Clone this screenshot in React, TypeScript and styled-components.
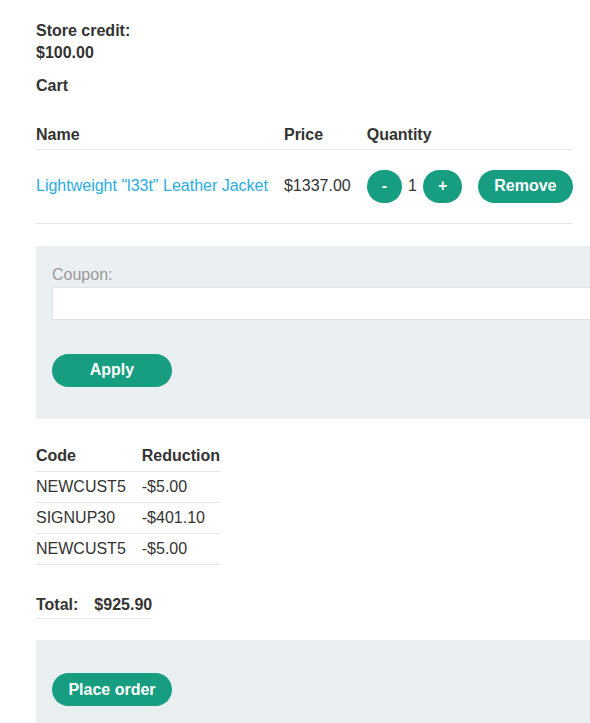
import React, { useState } from 'react';
import styled, { createGlobalStyle } from 'styled-components';

const GlobalStyle = createGlobalStyle`
  html, body {
    margin: 0;
    padding: 0;
    overflow-x: hidden;
    background: #fff;
  }
  body {
    font-family: "Liberation Sans", Arial, sans-serif;
    font-size: 16px;
    line-height: 1.4;
    color: #333332;
  }
`;

type Coupon = { code: string; reduction: string };

const coupons: Coupon[] = [
  { code: 'NEWCUST5', reduction: '-$5.00' },
  { code: 'SIGNUP30', reduction: '-$401.10' },
  { code: 'NEWCUST5', reduction: '-$5.00' },
];

const App: React.FC = () => {
  const [quantity, setQuantity] = useState(1);
  const [coupon, setCoupon] = useState('');

  return (
    <Page>
      <GlobalStyle />
      <Credit>
        Store credit:
        <br />
        $100.00
      </Credit>
      <Heading>Cart</Heading>

      <CartTable>
        <thead>
          <tr>
            <HeadCell>Name</HeadCell>
            <HeadCell>Price</HeadCell>
            <HeadCell>Quantity</HeadCell>
            <HeadCell />
          </tr>
        </thead>
        <tbody>
          <tr>
            <ItemCell>
              <ProductLink href="#">Lightweight "l33t" Leather Jacket</ProductLink>
            </ItemCell>
            <ItemCell>$1337.00</ItemCell>
            <ItemCell>
              <QuantityBox>
                <Button $narrow onClick={() => setQuantity(q => Math.max(0, q - 1))}>-</Button>
                <span>{quantity}</span>
                <Button $narrow onClick={() => setQuantity(q => q + 1)}>+</Button>
              </QuantityBox>
            </ItemCell>
            <ItemCell>
              <Button>Remove</Button>
            </ItemCell>
          </tr>
        </tbody>
      </CartTable>

      <CouponPanel>
        <FieldLabel htmlFor="coupon">Coupon:</FieldLabel>
        <TextInput id="coupon" value={coupon} onChange={e => setCoupon(e.target.value)} />
        <ApplyButton $wide>Apply</ApplyButton>
      </CouponPanel>

      <CodeTable>
        <thead>
          <tr>
            <CodeHead>Code</CodeHead>
            <CodeHead>Reduction</CodeHead>
          </tr>
        </thead>
        <tbody>
          {coupons.map((c, i) => (
            <tr key={i}>
              <CodeCell>{c.code}</CodeCell>
              <CodeCell>{c.reduction}</CodeCell>
            </tr>
          ))}
        </tbody>
      </CodeTable>

      <TotalTable>
        <tbody>
          <tr>
            <TotalCell>Total:</TotalCell>
            <TotalCell>$925.90</TotalCell>
          </tr>
        </tbody>
      </TotalTable>

      <OrderPanel>
        <Button $wide>Place order</Button>
      </OrderPanel>
    </Page>
  );
};

const Page = styled.div`
  padding: 20px 0 0 36px;
`;

const Credit = styled.p`
  margin: 0;
  font-weight: bold;
`;

const Heading = styled.p`
  margin: 10px 0 0;
  font-weight: bold;
`;

const CartTable = styled.table`
  border-collapse: collapse;
  margin-top: 21px;
`;

const HeadCell = styled.th`
  text-align: left;
  font-weight: bold;
  padding: 6px 16px 2px 0;
  border-bottom: 1px solid #e6e6e6;
  &:last-child {
    padding-right: 0;
  }
`;

const ItemCell = styled.td`
  padding: 20px 16px 20px 0;
  border-bottom: 1px solid #e6e6e6;
  vertical-align: middle;
  white-space: nowrap;
  &:last-child {
    padding-right: 0;
  }
`;

const ProductLink = styled.a`
  color: #29ace5;
  text-decoration: none;
`;

const QuantityBox = styled.div`
  display: flex;
  align-items: center;
  gap: 6px;
`;

const Button = styled.button<{ $narrow?: boolean; $wide?: boolean }>`
  display: inline-flex;
  align-items: center;
  justify-content: center;
  height: 33px;
  min-width: ${p => (p.$wide ? '120px' : '0')};
  padding: 0 ${p => (p.$narrow ? '15px' : '16px')};
  border: none;
  border-radius: 25px;
  background: #179d80;
  color: #fff;
  font-family: "Liberation Sans", Arial, sans-serif;
  font-size: 16px;
  font-weight: bold;
  cursor: pointer;
`;

const Panel = styled.div`
  width: 600px;
  background: #eaeff2;
  box-sizing: border-box;
  padding: 0 16px 32px;
`;

const CouponPanel = styled(Panel)`
  margin-top: 22px;
  padding-top: 18px;
`;

const FieldLabel = styled.label`
  display: block;
  color: #999;
  margin-bottom: 1px;
`;

const TextInput = styled.input`
  display: block;
  width: 100%;
  height: 33px;
  box-sizing: border-box;
  border: 1px solid #e0e3e5;
  background: #fff;
  font-family: "Liberation Sans", Arial, sans-serif;
  font-size: 16px;
  padding: 0 8px;
  outline: none;
`;

const ApplyButton = styled(Button)`
  margin-top: 34px;
`;

const CodeTable = styled.table`
  border-collapse: collapse;
  margin-top: 22px;
  line-height: 22px;
`;

const CodeHead = styled.th`
  text-align: left;
  font-weight: bold;
  padding: 4px 16px 4px 0;
  border-bottom: 1px solid #e6e6e6;
  &:last-child {
    padding-right: 0;
  }
`;

const CodeCell = styled.td`
  padding: 4px 16px 4px 0;
  border-bottom: 1px solid #e6e6e6;
  &:last-child {
    padding-right: 0;
  }
`;

const TotalTable = styled.table`
  border-collapse: collapse;
  margin-top: 24px;
`;

const TotalCell = styled.td`
  font-weight: bold;
  padding: 5px 16px 2px 0;
  border-bottom: 1px solid #e6e6e6;
  &:last-child {
    padding-right: 0;
  }
`;

const OrderPanel = styled(Panel)`
  margin-top: 21px;
  padding-top: 33px;
`;

export default App;
